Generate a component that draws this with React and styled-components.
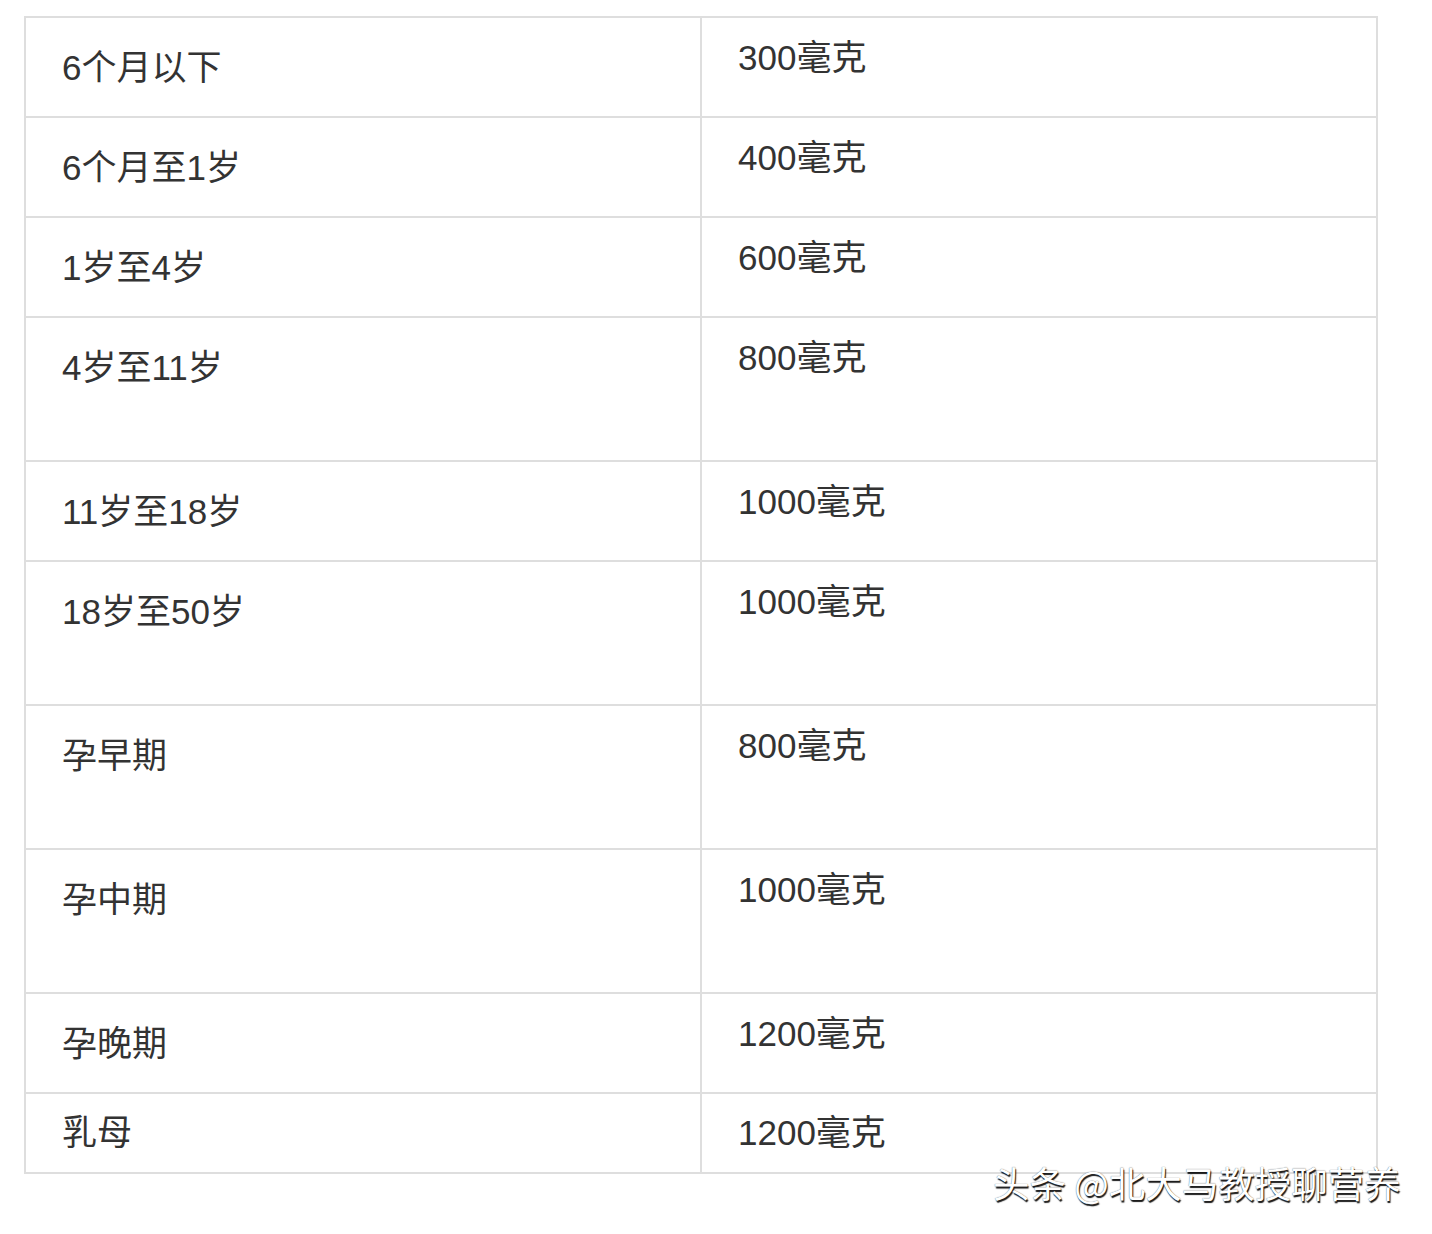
import React from 'react';
import styled, { createGlobalStyle } from 'styled-components';

const GlobalStyle = createGlobalStyle`
	html, body {
		margin: 0;
		padding: 0;
		background: #ffffff;
	}
	body {
		font-family: 'Liberation Sans', 'Noto Sans CJK SC', sans-serif;
		color: #333333;
	}
`;

const Page = styled.div`
	position: relative;
	width: 1432px;
	height: 1234px;
	padding: 16px 0 0 24px;
	box-sizing: border-box;
`;

const Table = styled.div`
	width: 1354px;
	box-sizing: border-box;
	border: 2px solid #dedede;
`;

const Row = styled.div`
	display: grid;
	grid-template-columns: 676px 1fr;
	height: ${props => props.height}px;
	border-top: 2px solid #dedede;

	&:first-child {
		border-top: none;
	}
`;

const Cell = styled.div`
	box-sizing: border-box;
	padding: ${props => props.top}px 0 0 36px;
	font-family: 'Liberation Sans', 'Noto Sans CJK SC', sans-serif;
	font-size: 35px;
	line-height: 49px;
	color: #333333;
	white-space: nowrap;

	&:first-child {
		border-right: 2px solid #dedede;
	}
`;

const Watermark = styled.div`
	position: absolute;
	left: 993px;
	top: 1158px;
	font-family: 'Noto Sans CJK SC', sans-serif;
	font-size: 36.5px;
	line-height: 50px;
	color: #ffffff;
	text-shadow: 1px 2px 1px rgba(0, 0, 0, 0.9), 0 0 1px rgba(0, 0, 0, 0.7);
	white-space: nowrap;
`;

const rows = [
	{ age: '6个月以下', amount: '300毫克', height: 98 },
	{ age: '6个月至1岁', amount: '400毫克', height: 98 },
	{ age: '1岁至4岁', amount: '600毫克', height: 98 },
	{ age: '4岁至11岁', amount: '800毫克', height: 142 },
	{ age: '11岁至18岁', amount: '1000毫克', height: 98 },
	{ age: '18岁至50岁', amount: '1000毫克', height: 142 },
	{ age: '孕早期', amount: '800毫克', height: 142 },
	{ age: '孕中期', amount: '1000毫克', height: 142 },
	{ age: '孕晚期', amount: '1200毫克', height: 98 },
	{ age: '乳母', amount: '1200毫克', height: 78, last: true }
];

const App = () => {
	return (
		<Page>
			<GlobalStyle />
			<Table>
				{rows.map(item => (
					<Row key={item.age} height={item.height}>
						<Cell top={item.last ? 14 : 25}>{item.age}</Cell>
						<Cell top={item.last ? 14 : 15}>{item.amount}</Cell>
					</Row>
				))}
			</Table>
			<Watermark>头条 @北大马教授聊营养</Watermark>
		</Page>
	);
};

export default App;
